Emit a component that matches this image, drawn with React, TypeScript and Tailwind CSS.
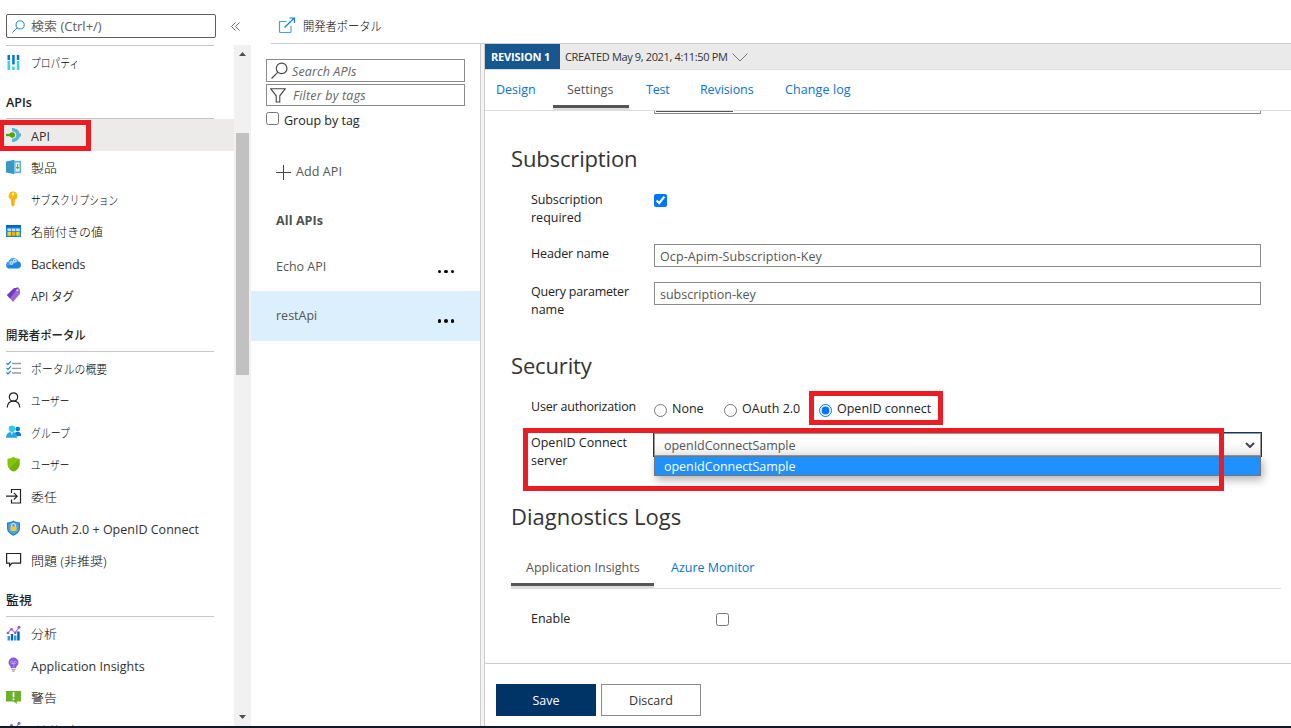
import type { ReactNode } from "react";
import clsx from "clsx";

/* ---------- icons ---------- */

const Icon = ({ children }: { children: ReactNode }) => (
  <svg width="16" height="16" viewBox="0 0 16 16" fill="none" className="shrink-0">
    {children}
  </svg>
);

const SearchIcon = ({ size = 13, color = "#0078d4" }) => (
  <svg width={size} height={size} viewBox="0 0 16 16" fill="none" stroke={color} strokeWidth="1.1" className="shrink-0">
    <circle cx="10" cy="6" r="5" />
    <path d="M6.3 9.7 0.5 15.5" />
  </svg>
);

const PropertiesIcon = () => (
  <Icon>
    <path d="M1.500 0h2.500v5H1.500zM6.200 0h2.500v9.500H6.200zM10.800 0h2.500v5h-2.500z" fill="#0078d4" />
    <path d="M1.500 6h2.500v9H1.500zM6.200 11.500h2.500V15H6.200zM10.800 6h2.500v9h-2.500z" fill="#32d4f5" />
  </Icon>
);

const ApiIcon = () => (
  <Icon>
    <path d="M6 1c4 0 7 2.200 7.800 5.600H15v2.800h-1.200C13 12.800 10 15 6 15v-3.200c2.600 0 4.300-1.600 4.300-3.800S8.600 4.200 6 4.200z" fill="#59b4d9" />
    <circle cx="6.300" cy="8" r="2.700" fill="#57a300" />
    <path d="M0 6.800h5v2.400H0z" fill="#57a300" />
  </Icon>
);

const ProductIcon = () => (
  <Icon>
    <path d="M0 2.500 8.500.8v14.400L0 13.500z" fill="#3999c6" />
    <path d="M8.500 1.800h6.500v12.400H8.500z" fill="#59b4d9" />
    <path d="M9.500 3.500h4v9h-4z" fill="#e8f5fb" />
    <path d="M11.100 5h1v3h1.200l-1.700 2.500L9.900 8h1.200z" fill="#57a300" />
  </Icon>
);

const KeyIcon = () => (
  <Icon>
    <path d="M7 .5a4.300 4.300 0 0 0-1.800 8.200V14L7 15.700 8.800 14v-1.200l-.8-.9.800-.9V8.700A4.300 4.300 0 0 0 7 .5z" fill="#ffb900" />
    <circle cx="7" cy="3" r="1.200" fill="#fff" />
    <path d="M6.200 8v6l.6.500V8z" fill="#f58b1f" />
  </Icon>
);

const TableIcon = () => (
  <Icon>
    <path d="M0 2h15v12H0z" fill="#1b86dd" />
    <path d="M0 2h15v2.500H0z" fill="#0067c0" />
    <path d="M1.500 5.500h3.600V8H1.500zM5.800 5.500h3.600V8H5.800zM10.100 5.500h3.600V8h-3.600z" fill="#c3e2f7" />
    <path d="M1.500 8.700h3.600v4H1.500zM10.100 8.700h3.600v4h-3.600z" fill="#f2d024" />
    <path d="M5.800 8.700h3.600v4H5.800z" fill="#dfb51c" />
  </Icon>
);

const CloudIcon = () => (
  <Icon>
    <path d="M3.600 13.500a3.500 3.500 0 0 1-.8-6.900A4.900 4.900 0 0 1 12 6.200a3.700 3.700 0 0 1-.3 7.300z" fill="#1b86dd" />
    <path d="M2.800 6.600A4.900 4.900 0 0 1 12 6.200c-2 1.800-5 3.300-11 4.300C.8 9 1.300 7.400 2.800 6.600z" fill="#4aa5ee" />
    <circle cx="8.800" cy="5.700" r="1.900" fill="#d4eafa" />
    <circle cx="5.500" cy="8" r="1.900" fill="#b9dcf6" />
    <circle cx="8.800" cy="5.700" r=".6" fill="#1b86dd" />
    <circle cx="5.500" cy="8" r=".6" fill="#1b86dd" />
  </Icon>
);

const TagIcon = () => (
  <Icon>
    <path d="M1 8 8 1.300 12.300.6 14 2.500v4.300L7 15z" fill="#9a6bd6" />
    <path d="M1 8 8 1.300 12.300.6 4 11.500z" fill="#7437c4" />
    <circle cx="11.300" cy="3.300" r="1" fill="#e8dcf8" />
  </Icon>
);

const ChecklistIcon = () => (
  <Icon>
    <path d="M6 3.500h9M6 8.300h9M6 13h9" stroke="#9a9a9a" strokeWidth="1.300" />
    <path d="m.5 3 1.500 1.500L4.800 1.500M.5 7.800 2 9.300l2.800-3M.5 12.500 2 14l2.800-3" stroke="#1b86dd" strokeWidth="1.200" />
  </Icon>
);

const UserIcon = () => (
  <Icon>
    <circle cx="7.500" cy="5" r="4.200" stroke="#222" strokeWidth="1.200" />
    <path d="M1.200 15.500C1.500 11.500 4 9.200 7.500 9.200s6 2.300 6.300 6.300" stroke="#222" strokeWidth="1.200" />
  </Icon>
);

const GroupIcon = () => (
  <Icon>
    <circle cx="11.700" cy="5" r="2.300" fill="#0078d4" />
    <path d="M8 12c0-3 1.500-4.200 3.500-4.200S15.200 9 15.200 12z" fill="#0078d4" />
    <circle cx="6" cy="4.700" r="3.200" fill="#32c8ec" />
    <path d="M0 13.700c0-4 2.500-5.800 5.700-5.800s5.700 1.800 5.700 5.800z" fill="#29a9d8" />
    <path d="m4.300 8 1.500 3 1.500-3z" fill="#9cebff" />
  </Icon>
);

const ShieldIcon = () => (
  <Icon>
    <path d="M7.500.7C9.500 2.200 11.500 2.600 13.500 2.700V8c0 4-3 6.200-6 7.600-3-1.400-6-3.600-6-7.600V2.700c2-.1 4-.5 6-2z" fill="#86c40d" />
    <path d="M13.500 2.700V8c0 4-3 6.200-6 7.600-1.600-.7-3-1.700-4.200-3z" fill="#76b005" />
  </Icon>
);

const DelegateIcon = () => (
  <Icon>
    <path d="M5.500 5V1.500H14.500v13.500H5.500V11.500M0 8.200h11M7.800 4.800l3.400 3.400-3.400 3.400" stroke="#222" strokeWidth="1.200" />
  </Icon>
);

const OAuthIcon = () => (
  <Icon>
    <path d="M7.500.5C9.500 2 11.800 2.300 14 2.400V8c0 4-3.200 6.300-6.500 7.700C4.200 14.300 1 12 1 8V2.400C3.200 2.300 5.500 2 7.500.5z" fill="#1f80d4" />
    <path d="M7.500 1.800c1.700 1.200 3.500 1.600 5.300 1.700V8c0 3.200-2.500 5.200-5.300 6.400C4.700 13.200 2.200 11.200 2.200 8V3.500C4 3.400 5.800 3 7.500 1.800z" fill="#4ba3e8" />
    <path d="M5.700 7V5.300a1.800 1.800 0 0 1 3.600 0V7" stroke="#ffe9a8" strokeWidth="1.100" />
    <path d="M4.500 6.500h6v4.500h-6z" fill="#ffc522" />
  </Icon>
);

const IssueIcon = () => (
  <Icon>
    <path d="M.6 1.500h14v9.600H6L3.600 13.800v-2.700H.6z" stroke="#222" strokeWidth="1.200" />
  </Icon>
);

const AnalyticsIcon = () => (
  <Icon>
    <path d="M1.500 11H4v4.500H1.500zM8 10.500h2.500v5H8z" fill="#2f9be8" />
    <path d="M4.800 9h2.400v6.500H4.800zM11.200 6.500h2.500v9h-2.500z" fill="#0067b8" />
    <path d="M1.800 8 5.500 4l3.700 4 4-6" stroke="#9f6be0" strokeWidth="1.100" />
    <circle cx="1.900" cy="8" r="1.300" fill="#9258dc" />
    <circle cx="5.500" cy="4.200" r="1.300" fill="#9258dc" />
    <circle cx="9.200" cy="7.700" r="1.300" fill="#9258dc" />
    <circle cx="13" cy="2.200" r="1.500" fill="#9258dc" />
  </Icon>
);

const BulbIcon = () => (
  <Icon>
    <path d="M7.500.5a5 5 0 0 0-5 4.900c0 2.600 2.300 3.500 2.600 5.600h4.800c.3-2.100 2.600-3 2.600-5.600a5 5 0 0 0-5-4.900z" fill="#8a5ad6" />
    <path d="M7 7.500V5.200a1.200 1.200 0 1 0-1.200 1.200h3.400A1.200 1.200 0 1 0 8 5.200V10.500" stroke="#d3bdf4" strokeWidth=".6" />
    <path d="M5.500 11.700h4V13h-4zM6.200 13.500h2.600v1.200H6.200z" fill="#a0a0a0" />
  </Icon>
);

const AlertIcon = () => (
  <Icon>
    <path d="M0 2h15v10.500h-4.200V15l-3-2.500H0z" fill="#6bb12c" />
    <path d="M6.600 3.300h1.800v5H6.600zM6.600 9.500h1.800v1.600H6.600z" fill="#fff" />
  </Icon>
);

const FilterIcon = () => (
  <svg width="16" height="15" viewBox="0 0 16 15" fill="none" stroke="#444" strokeWidth="1.100">
    <path d="M.8.8h14.400L9.800 7.800V14H6.200V7.800z" />
  </svg>
);

const ExternalIcon = () => (
  <svg width="18" height="17" viewBox="0 0 18 17" fill="none" stroke="#0f7fd6" strokeWidth="1.200">
    <path d="M8.500 4.500H1.500V14.500q0 1 1 1H12q1 0 1-1V9" opacity=".75" />
    <path d="M6.500 10.500 16 1.200M11.500 1h5v5" />
  </svg>
);

/* ---------- sidebar ---------- */

type MenuEntry = { icon: ReactNode; label: string; fit?: string; active?: boolean };

const MenuItem = ({ icon, label, fit, active }: MenuEntry) => (
  <li className={clsx("flex h-8 items-center gap-[9px] pl-1.5", active && "bg-[#edebe9]")}>
    {icon}
    <span className={clsx("origin-left pt-[5px] whitespace-nowrap", fit)}>{label}</span>
  </li>
);

const SectionTitle = ({ label, className, fit }: { label: string; className: string; fit?: string }) => (
  <h3 className={clsx("ml-1.5 w-[208px] border-b border-[#c8c6c4] leading-[18px] text-[#222]", className)}>
    <span className={clsx("inline-block origin-left whitespace-nowrap", fit)}>{label}</span>
  </h3>
);

const apiItems: MenuEntry[] = [
  { icon: <ApiIcon />, label: "API", active: true },
  { icon: <ProductIcon />, label: "製品", fit: "font-light text-black scale-x-[1.03]" },
  { icon: <KeyIcon />, label: "サブスクリプション", fit: "font-light text-black scale-x-[0.775]" },
  { icon: <TableIcon />, label: "名前付きの値", fit: "font-light text-black scale-x-[0.96]" },
  { icon: <CloudIcon />, label: "Backends", fit: "tracking-[-0.2px]" },
  { icon: <TagIcon />, label: "API タグ", fit: "scale-x-[0.91]" },
];

const portalItems: MenuEntry[] = [
  { icon: <ChecklistIcon />, label: "ポータルの概要", fit: "font-light text-black scale-x-[0.87]" },
  { icon: <UserIcon />, label: "ユーザー", fit: "font-light text-black scale-x-[0.77]" },
  { icon: <GroupIcon />, label: "グループ", fit: "font-light text-black scale-x-[0.79]" },
  { icon: <ShieldIcon />, label: "ユーザー", fit: "font-light text-black scale-x-[0.77]" },
  { icon: <DelegateIcon />, label: "委任", fit: "font-light text-black scale-x-[1.03]" },
  { icon: <OAuthIcon />, label: "OAuth 2.0 + OpenID Connect" },
  { icon: <IssueIcon />, label: "問題 (非推奨)", fit: "font-light text-black scale-x-[1.04]" },
];

const monitorItems: MenuEntry[] = [
  { icon: <AnalyticsIcon />, label: "分析", fit: "font-light text-black scale-x-[1.03]" },
  { icon: <BulbIcon />, label: "Application Insights" },
  { icon: <AlertIcon />, label: "警告", fit: "font-light text-black scale-x-[1.03]" },
  { icon: <AnalyticsIcon />, label: "メトリック", fit: "font-light text-black scale-x-[0.75]" },
];

const Sidebar = () => (
  <aside className="flex w-[251px] shrink-0 flex-col">
    <div className="flex h-[45px] shrink-0 pt-[14px] pl-1.5">
      <div className="flex h-6 w-[210px] items-center gap-[6px] rounded-[2px] border border-[#605e5c] pl-[5px] text-[#605e5c]">
        <SearchIcon />
        <span className="origin-left scale-x-[1.04] pt-[2px]">検索 (Ctrl+/)</span>
      </div>
      <svg width="9" height="9" viewBox="0 0 9 9" fill="none" stroke="#666" className="mt-[8px] ml-[15px]">
        <path d="M4.500.5l-4 4 4 4M8.500.5l-4 4 4 4" />
      </svg>
    </div>
    <div className="flex min-h-0 flex-1">
      <nav className="w-[234px] overflow-hidden text-[#323130]">
        <div className="mb-px ml-1.5 h-px w-[208px] bg-[#c8c6c4]" />
        <ul>
          <MenuItem icon={<PropertiesIcon />} label="プロパティ" fit="font-light text-black scale-x-[0.78] -mt-[2px]" />
        </ul>
        <SectionTitle label="APIs" className="h-10 pt-[15px] font-semibold" />
        <ul>{apiItems.map((item, i) => <MenuItem key={i} {...item} />)}</ul>
        <SectionTitle label="開発者ポータル" className="h-[41px] pt-4 font-medium" fit="scale-x-[0.91]" />
        <ul>{portalItems.map((item, i) => <MenuItem key={i} {...item} />)}</ul>
        <SectionTitle label="監視" className="h-[41px] pt-4 font-medium" fit="scale-x-[1.03]" />
        <ul>{monitorItems.map((item, i) => <MenuItem key={i} {...item} />)}</ul>
      </nav>
      <div className="flex w-[17px] flex-col items-center bg-[#f1f1f1] pt-[7px] pb-[7px]">
        <svg width="7" height="4"><path d="M0 4 3.500 0 7 4z" fill="#505050" /></svg>
        <div className="mt-[77px] h-[242px] w-[13px] bg-[#c1c1c1]" />
        <svg width="7" height="4" className="mt-auto"><path d="M0 0h7L3.500 4z" fill="#505050" /></svg>
      </div>
    </div>
  </aside>
);

/* ---------- api list ---------- */

const Dots = () => (
  <span className="mt-[10px] flex gap-[3px]">
    <i className="size-[3.500px] rounded-full bg-black" />
    <i className="size-[3.500px] rounded-full bg-black" />
    <i className="size-[3.500px] rounded-full bg-black" />
  </span>
);

const ApiRow = ({ name, selected }: { name: string; selected?: boolean }) => (
  <div className={clsx("flex h-[50px] items-center justify-between pr-[26px] pl-[25px] text-[#555]", selected ? "bg-[#dceffd]" : "pt-px")}>
    <span className="pt-px">{name}</span>
    <Dots />
  </div>
);

const ApiList = () => (
  <section className="flex w-[230px] shrink-0 flex-col border-r border-[#ccc] pt-[15px]">
    <div className="ml-[15px] flex h-[23px] w-[199px] items-center gap-1 border border-[#8a8a8a] pl-1 text-[#666] italic">
      <SearchIcon size={17} color="#444" />
      <span className="pt-[3px] tracking-[0.1px]">Search APIs</span>
    </div>
    <div className="mt-[2px] ml-[15px] flex h-[22px] w-[199px] items-center gap-[7px] border border-[#8a8a8a] pl-[3px] text-[#666] italic">
      <FilterIcon />
      <span className="pt-[2px] tracking-[0.2px]">Filter by tags</span>
    </div>
    <label className="mt-[5px] ml-[15px] flex h-[18px] gap-[5px] leading-[20px] text-[#222]">
      <input type="checkbox" className="mt-px size-[13px]" />
      Group by tag
    </label>
    <div className="mt-[34px] ml-[25px] flex h-[18px] items-center gap-[5px] text-[#555]">
      <svg width="15" height="15" stroke="#444"><path d="M7.500 0v15M0 7.500h15" /></svg>
      <span className="tracking-[0.1px]">Add API</span>
    </div>
    <div className="mt-[31px] mb-[11px] ml-[25px] h-[18px] leading-[18px] font-bold tracking-[0.1px] text-[#505050]">All APIs</div>
    <ApiRow name="Echo API" />
    <ApiRow name="restApi" selected />
  </section>
);

/* ---------- settings ---------- */

const Title = ({ children, className }: { children: string; className?: string }) => (
  <h2 className={clsx("ml-[26px] h-[30px] text-[22px] leading-[28px] text-[#333]", className)}>{children}</h2>
);

const Field = ({ label, className, children }: { label: ReactNode; className: string; children: ReactNode }) => (
  <div className={clsx("flex pl-[46px] leading-[18px] text-[#222]", className)}>
    <div className="w-[123px] shrink-0 pt-px whitespace-nowrap">{label}</div>
    {children}
  </div>
);

const TextBox = ({ value, className }: { value: string; className?: string }) => (
  <div className={clsx("h-[23px] w-[607px] border border-[#8a8a8a] pl-[5px] leading-[24px] text-[#555]", className)}>{value}</div>
);

const Radio = ({ label, checked, className }: { label: string; checked?: boolean; className?: string }) => (
  <label className={clsx("relative flex gap-[5px]", className)}>
    <input type="radio" name="auth" defaultChecked={checked} className="mt-[7px] size-[13px] accent-[#0075ff]" />
    <span className="mt-[3px] whitespace-nowrap">{label}</span>
    {checked && <span className="absolute -top-[6px] -left-[10px] h-[34px] w-[134px] border-[5px] border-[#ed1c24]" />}
  </label>
);

const tabs = [
  { name: "Design", width: "w-[68px] pl-[11px]" },
  { name: "Settings", width: "w-[76px] pl-[14px]", active: true },
  { name: "Test", width: "w-[71px] pl-[17px] tracking-[-0.2px]" },
  { name: "Revisions", width: "w-[85px] tracking-[-0.1px]" },
  { name: "Change log", width: "tracking-[0.1px]" },
];

const SettingsForm = () => (
  <div className="h-[552px] shrink-0 overflow-hidden">
    <div className="ml-[169px] h-[3px] w-[607px] border border-t-0 border-[#8a8a8a] px-px">
      <div className="h-px w-[77px] bg-[#555]" />
    </div>

    <Title className="mt-[30px] tracking-[-0.15px]">Subscription</Title>
    <Field className="mt-4 h-[54px]" label={<><span className="tracking-[-0.1px]">Subscription</span><br />required</>}>
      <input type="checkbox" defaultChecked className="mt-1 size-[13px] accent-[#0075ff]" />
    </Field>
    <Field className="h-[38px]" label={<span className="tracking-[-0.15px]">Header name</span>}>
      <TextBox value="Ocp-Apim-Subscription-Key" className="tracking-[0.1px]" />
    </Field>
    <Field className="h-9" label={<><span className="tracking-[-0.2px]">Query parameter</span><br />name</>}>
      <TextBox value="subscription-key" />
    </Field>

    <Title className="mt-[33px] tracking-[-0.15px]">Security</Title>
    <Field className="mt-4 h-9" label={<span className="tracking-[-0.2px]">User authorization</span>}>
      <Radio label="None" className="w-[70px]" />
      <Radio label="OAuth 2.0" className="w-[95px]" />
      <Radio label="OpenID connect" checked />
    </Field>
    <div className="relative">
      <Field className="h-9" label={<>OpenID Connect<br />server</>}>
        <div className="relative -mt-px -ml-px h-[25px] w-[609px] border border-[#0b3a66] bg-white">
          <div className="flex h-full items-center justify-between border border-[#999] bg-linear-to-b from-white from-40% to-[#ebebeb] pr-[5px] pl-[9px] text-[#555]">
            <span className="pt-[2px] tracking-[-0.05px]">openIdConnectSample</span>
            <svg width="10" height="6" fill="none" stroke="#444" strokeWidth="2"><path d="m1 1 4 4 4-4" /></svg>
          </div>
          <div className="absolute top-[23px] left-0 h-[20px] w-[607px] border border-[#767676] bg-[#1e90ff] pl-[9px] leading-[20px] tracking-[-0.05px] text-white shadow-[2px_4px_8px_rgba(0,0,0,0.3)]">
            openIdConnectSample
          </div>
        </div>
      </Field>
      <span className="absolute -top-[5px] left-[38px] h-[63px] w-[701px] border-[5px] border-[#ed1c24]" />
    </div>

    <Title className="mt-[33px]">Diagnostics Logs</Title>
    <div className="mr-[10px] ml-[26px] flex h-[57px] border-b border-[#ddd] pt-[26px] leading-[20px]">
      <div className="h-[31px] w-[143px] border-b-[3px] border-[#ddd]">
        <div className="h-[28px] border-b-[3px] border-[#555] pl-[15px] text-[#555]">Application Insights</div>
      </div>
      <div className="pl-[17px] text-[#0a72d0]">Azure Monitor</div>
    </div>
    <Field className="mt-5" label="Enable">
      <input type="checkbox" className="mt-1 ml-[62px] size-[13px]" />
    </Field>
  </div>
);

const Details = () => (
  <section className="flex min-w-0 flex-1 flex-col border-l border-[#ccc]">
    <div className="flex h-[26px] shrink-0 border-b border-[#ddd] bg-[#eaeaea] text-[11px] leading-[26px]">
      <div className="w-[75px] bg-[#17578f] pl-[6px] font-bold tracking-[-0.15px] text-white">REVISION 1</div>
      <div className="flex items-center gap-[5px] pl-[5px] text-[#333]">
        <span className="tracking-[-0.36px]">CREATED May 9, 2021, 4:11:50 PM</span>
        <svg width="16" height="9" fill="none" stroke="#777" className="mt-[2px]"><path d="m.5.5 7.500 7.500L15.500.5" /></svg>
      </div>
    </div>
    <div className="flex h-[41px] shrink-0 border-b border-[#ddd] leading-[40px] text-[#0a72d0]">
      {tabs.map((tab) => (
        <div
          key={tab.name}
          className={clsx(tab.width, tab.active && "h-[38px] border-b-[3px] border-[#555] text-[#555] shadow-[0_2px_0_#ddd]")}
        >
          {tab.name}
        </div>
      ))}
    </div>
    <SettingsForm />
    <div className="flex flex-1 gap-[5px] border-t border-[#ccc] pt-5 pl-[11px] text-center leading-[31px]">
      <button className="h-8 w-[100px] bg-[#003366] text-white">Save</button>
      <button className="h-8 w-[100px] border border-[#8a8a8a] text-[#333]">Discard</button>
    </div>
  </section>
);

export default function App() {
  return (
    <div className="relative flex h-[728px] w-[1291px] flex-col overflow-hidden bg-white font-['Open_Sans','Noto_Sans_CJK_JP',sans-serif] text-[12.5px]">
      <div className="flex min-h-0 flex-1">
        <Sidebar />
        <main className="flex min-w-0 flex-1 flex-col">
          <header className="ml-5 flex h-11 shrink-0 items-center gap-[7px] border-b border-[#ccc] pt-[7px] pl-[7px] text-[#323130]">
            <ExternalIcon />
            <span className="origin-left scale-x-[0.9] pt-[5px] font-light text-black">開発者ポータル</span>
          </header>
          <div className="flex min-h-0 flex-1">
            <ApiList />
            <div className="w-[3px] bg-[#f4f4f4]" />
            <Details />
          </div>
        </main>
      </div>
      <div className="h-[2px] shrink-0 bg-[#111827]" />
      <span className="absolute top-[120px] -left-px h-[31px] w-[92px] border-[5px] border-[#ed1c24]" />
    </div>
  );
}
